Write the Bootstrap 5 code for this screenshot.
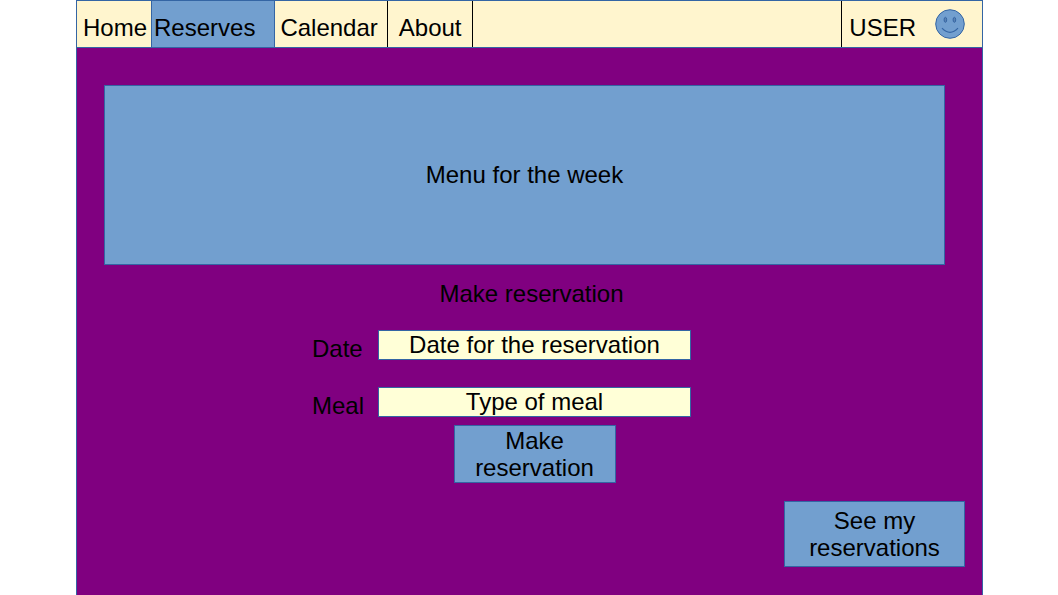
<!DOCTYPE html>
<html lang="en">
<head>
<meta charset="utf-8">
<meta name="viewport" content="width=device-width, initial-scale=1">
<title>Reserves</title>
<link href="https://cdn.jsdelivr.net/npm/bootstrap@5.3.0/dist/css/bootstrap.min.css" rel="stylesheet">
<style>
  :root { --fill: #729fcf; --line: #3465a4; --cream: #fff5ce; }
  body { font-family: "Liberation Sans", Arial, sans-serif; font-size: 24px; line-height: 27px; color: #000; background: #fff; }
  .app { margin: 0 75px 0 76px; border: 1px solid var(--line); border-bottom: 0; background: #800080; }
  .topbar { background: var(--cream); border-bottom: 1px solid var(--line); }
  .topbar a { display: block; padding: 13px 9px 6px; color: #000; text-decoration: none; border-right: 1px solid #000; }
  .topbar .home { padding: 13px 4px 6px 6px; border-color: var(--line); }
  .topbar .current { padding: 13px 19px 6px 2px; background: var(--fill); border-color: var(--line); }
  .topbar .calendar { padding-left: 5px; }
  .topbar .about { padding: 13px 10px 6px 11px; }
  .topbar .user { display: flex; gap: 19px; padding: 8px 17px 8px 7px; border-right: 0; border-left: 1px solid #000; }
  .user span { padding-top: 5px; height: 30px; }
  .content { padding: 37px 17px 27px 27px; }
  .week { min-height: 180px; margin-right: 20px; padding-bottom: 2px; background: var(--fill); border: 1px solid var(--line); }
  h1, h2 { font-size: 24px; line-height: 27px; font-weight: 400; margin: 0; }
  .form-title { padding: 15px 6px 0 0; }
  .reserve { display: grid; grid-template-columns: 67px minmax(0, 313px) 67px; row-gap: 27px; margin-top: 23px; }
  .reserve label { grid-column: 1; height: 30px; padding: 5px 0 0 1px; }
  .reserve .form-control { grid-column: 2; height: 30px; padding: 0; font-size: 24px; line-height: 27px; text-align: center; color: #000; background: #ffffd7; border: 1px solid var(--line); border-radius: 0; }
  .reserve .form-control::placeholder { color: #000; opacity: 1; }
  .btn-fill { font-size: 24px; line-height: 27px; color: #000; background: var(--fill); border: 1px solid var(--line); border-radius: 0; }
  .btn-fill:hover { background: #8fb3da; border-color: var(--line); }
  .btn-make { grid-column: 2; width: 162px; padding: 1px 12px; margin-top: -19px; }
  .btn-see { width: 181px; padding: 5px 12px; margin-top: 18px; }
</style>
</head>
<body>
<div class="app min-vh-100">
  <nav class="topbar d-flex justify-content-between" aria-label="Main">
    <ul class="list-unstyled d-flex mb-0">
      <li><a class="home" href="#">Home</a></li>
      <li><a class="current" href="#" aria-current="page">Reserves</a></li>
      <li><a class="calendar" href="#">Calendar</a></li>
      <li><a class="about" href="#">About</a></li>
    </ul>
    <a class="user" href="#"><span>USER</span>
      <svg width="30" height="30" viewBox="0 0 30 30" fill="none" stroke="#3465a4" aria-hidden="true">
        <circle cx="15" cy="15" r="14.3" fill="#729fcf"/>
        <ellipse cx="10.4" cy="10.8" rx="1.3" ry="2.5" fill="#5b83b3"/>
        <ellipse cx="19.4" cy="10.8" rx="1.3" ry="2.5" fill="#5b83b3"/>
        <path d="M7 19.2Q15 27.6 23 19.2" stroke-width="1.2"/>
      </svg>
    </a>
  </nav>
  <main class="content">
    <section class="week d-flex align-items-center justify-content-center">
      <h1>Menu for the week</h1>
    </section>
    <h2 class="form-title text-center">Make reservation</h2>
    <form class="reserve justify-content-center">
      <label for="date">Date</label>
      <input class="form-control" id="date" type="text" placeholder="Date for the reservation">
      <label for="meal">Meal</label>
      <input class="form-control" id="meal" type="text" placeholder="Type of meal">
      <button class="btn btn-fill btn-make mx-auto" type="button">Make reservation</button>
    </form>
    <div class="d-flex justify-content-end">
      <button class="btn btn-fill btn-see" type="button">See my reservations</button>
    </div>
  </main>
</div>
<script src="https://cdn.jsdelivr.net/npm/bootstrap@5.3.0/dist/js/bootstrap.bundle.min.js"></script>
</body>
</html>
